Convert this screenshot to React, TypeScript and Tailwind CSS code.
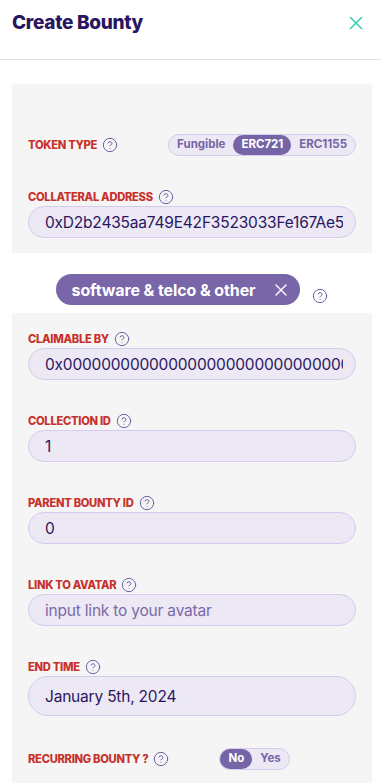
import { CircleHelp, X } from "lucide-react";

const font = { fontFamily: "Inter, 'Noto Sans', sans-serif" };

function Help({ className = "" }: { className?: string }) {
  return <CircleHelp className={`h-4 w-4 shrink-0 text-[#6f5fa3] ${className}`} strokeWidth={1.5} />;
}

function Label({ text }: { text: string }) {
  return (
    <div className="flex h-[14px] items-center gap-[5px]">
      <span className="text-[11.2px] font-extrabold uppercase leading-[14px] tracking-[-0.3px] text-[#c8312b]">{text}</span>
      <Help />
    </div>
  );
}

function Field({ label, value, placeholder, tall }: { label: string; value?: string; placeholder?: string; tall?: boolean }) {
  return (
    <div className="flex flex-col gap-[2px]">
      <Label text={label} />
      <input
        readOnly
        value={value ?? ""}
        placeholder={placeholder}
        className={`w-full rounded-full border border-[#d6cbef] bg-[#ece8f4] pl-[16px] pr-3 text-[15.5px] tracking-[-0.2px] text-[#2a1660] outline-none placeholder:text-[#7a6aa8] ${tall ? "h-[40px]" : "h-[32px]"}`}
        style={font}
      />
    </div>
  );
}

function Toggle({ options, active }: { options: string[]; active: string }) {
  return (
    <div className="flex h-[22px] items-center rounded-full border border-[#d6cbef] bg-[#ece8f4]">
      {options.map((o) => (
        <span
          key={o}
          className={`flex h-[20px] items-center rounded-full px-[8px] text-[11.5px] font-bold ${o === active ? "bg-[#7665a6] text-white" : "text-[#7665a6]"}`}
        >
          {o}
        </span>
      ))}
    </div>
  );
}

export default function App() {
  return (
    <div className="min-h-screen bg-white" style={font}>
      {/* header */}
      <div className="flex h-[60px] items-center justify-between border-b border-[#e2e2e2] pb-[13px] pl-3 pr-[14px]">
        <h1 className="text-[19px] font-extrabold tracking-[-0.3px] text-[#2a1660]">Create Bounty</h1>
        <X className="h-[22px] w-[22px] text-[#3fd3b3]" strokeWidth={1.9} />
      </div>

      <div className="pl-3 pr-[9px]">
        {/* token panel */}
        <div className="mt-6 flex flex-col gap-[34px] bg-[#f5f5f5] px-4 pb-[15px] pt-[50px]">
          <div className="flex items-center justify-between">
            <Label text="Token Type" />
            <Toggle options={["Fungible", "ERC721", "ERC1155"]} active="ERC721" />
          </div>
          <Field label="Collateral Address" value="0xD2b2435aa749E42F3523033Fe167Ae54322B8B2" />
        </div>

        {/* category chip */}
        <div className="flex items-start justify-center gap-[12px] pb-[8px] pt-[21px]">
          <div className="flex h-[31px] items-center gap-[16px] rounded-full bg-[#7866a8] pl-[16px] pr-[9px]">
            <span className="text-[16px] font-bold tracking-[-0.1px] text-white">software &amp; telco &amp; other</span>
            <X className="h-[20px] w-[20px] text-white" strokeWidth={1.6} />
          </div>
          <Help className="mt-[14px]" />
        </div>

        {/* details panel */}
        <div className="flex flex-col gap-[34px] bg-[#f5f5f5] px-4 pb-6 pt-[19px]">
          <Field label="Claimable by" value="0x0000000000000000000000000000000000000000" />
          <Field label="Collection ID" value="1" />
          <Field label="Parent Bounty ID" value="0" />
          <Field label="Link to avatar" placeholder="input link to your avatar" />
          <Field label="End time" value="January 5th, 2024" tall />
          <div className="-mt-[2px] flex items-center">
            <Label text="Recurring Bounty ?" />
            <div className="ml-[50px]">
              <Toggle options={["No", "Yes"]} active="No" />
            </div>
          </div>
        </div>
      </div>
    </div>
  );
}
